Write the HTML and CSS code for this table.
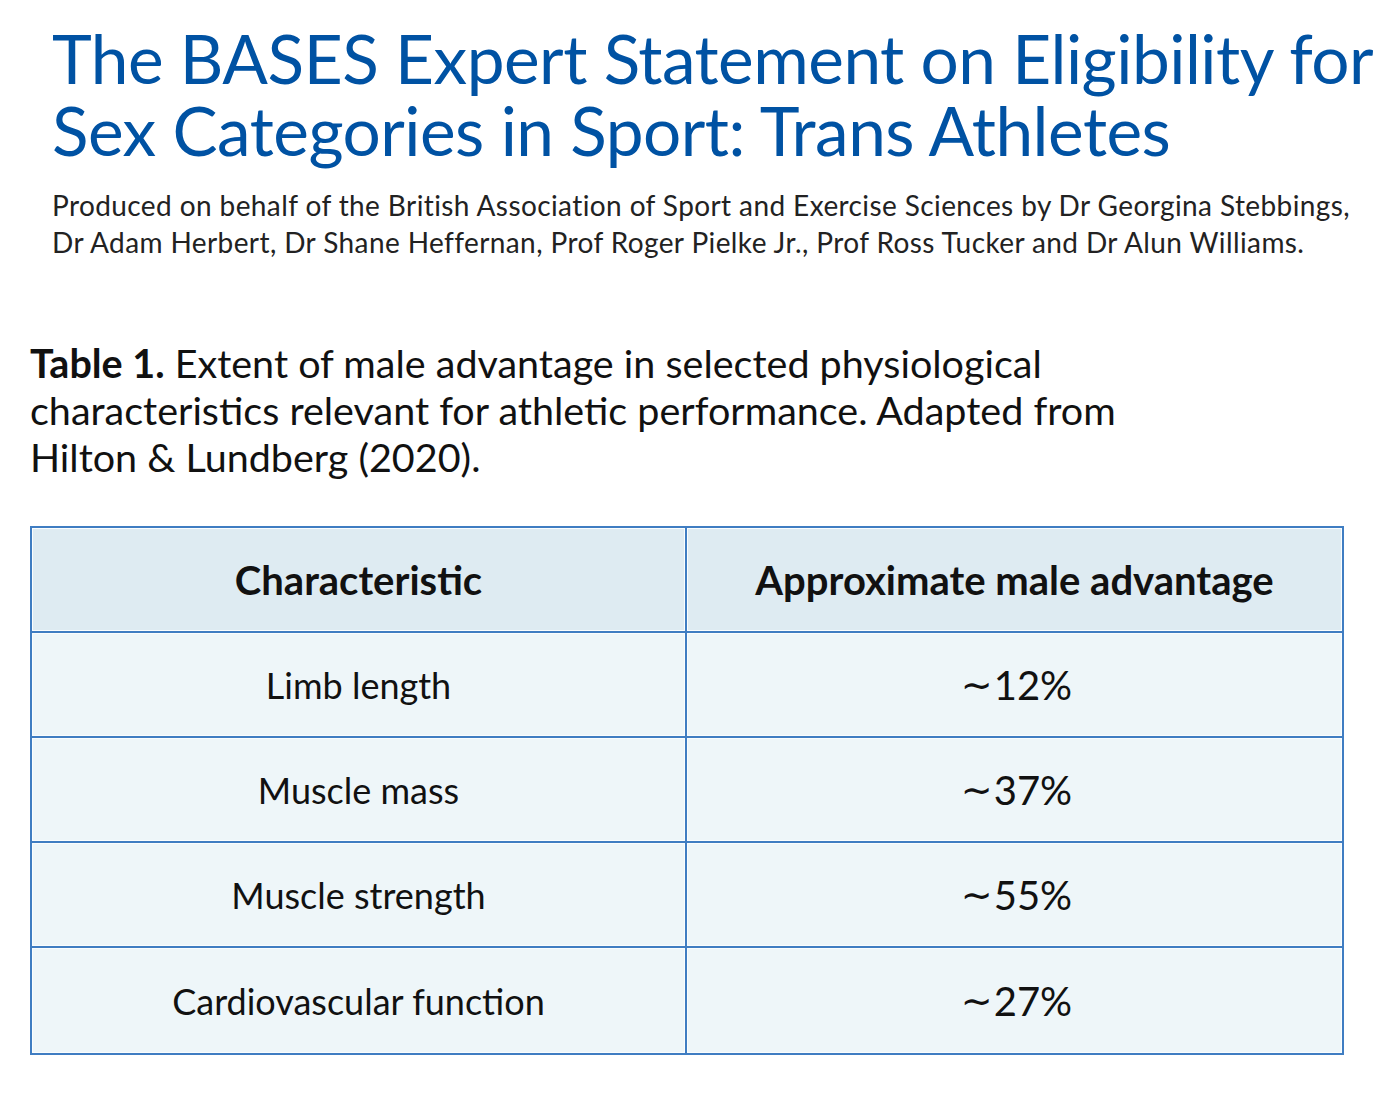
FILE: index.html
```html
<!DOCTYPE html>
<html lang="en">
<head>
<meta charset="utf-8">
<title>The BASES Expert Statement on Eligibility for Sex Categories in Sport</title>
<link rel="stylesheet" href="styles.css">
</head>
<body>
<main class="page">
  <header class="head">
    <h1 class="title">The BASES Expert Statement on Eligibility for<br>Sex Categories in Sport: Trans Athletes</h1>
    <p class="byline">Produced on behalf of the British Association of Sport and Exercise Sciences by Dr Georgina Stebbings,<br>Dr Adam Herbert, Dr Shane Heffernan, Prof Roger Pielke Jr., Prof Ross Tucker and Dr Alun Williams.</p>
  </header>
  <p class="caption"><strong>Table 1.</strong> Extent of male advantage in selected physiological<br>characteristics relevant for athletic performance. Adapted from<br>Hilton &amp; Lundberg (2020).</p>
  <div class="table">
    <div class="cell th">Characteristic</div>
    <div class="cell th">Approximate male advantage</div>
    <div class="cell">Limb length</div>
    <div class="cell val"><span class="tilde">∼</span>12%</div>
    <div class="cell">Muscle mass</div>
    <div class="cell val"><span class="tilde">∼</span>37%</div>
    <div class="cell">Muscle strength</div>
    <div class="cell val"><span class="tilde">∼</span>55%</div>
    <div class="cell">Cardiovascular function</div>
    <div class="cell val"><span class="tilde">∼</span>27%</div>
  </div>
</main>
</body>
</html>
```

FILE: styles.css
```css
html, body {
  margin: 0;
  padding: 0;
  background: #ffffff;
}
body {
  font-family: Lato, "Open Sans", sans-serif;
  color: #111;
}
.page {
  width: 1400px;
  padding: 0 0 0 30px;
  box-sizing: border-box;
}
.head {
  padding-left: 22px;
}
.title {
  margin: 0;
  padding-top: 22px;
  font-size: 67.5px;
  line-height: 72px;
  font-weight: 400;
  color: #0052a3;
  letter-spacing: -0.5px;
  white-space: nowrap;
}
.byline {
  margin: 21px 0 0;
  font-size: 28px;
  line-height: 37px;
  color: #222;
  letter-spacing: 0.4px;
  white-space: nowrap;
}
.caption {
  margin: 78px 0 0;
  font-size: 39.5px;
  line-height: 47px;
  color: #111;
  white-space: nowrap;
}
.caption strong {
  font-weight: 700;
}
.table {
  margin-top: 46px;
  width: 1314px;
  display: grid;
  grid-template-columns: 1fr 1fr;
  grid-auto-rows: 105px;
  border: 2px solid #3f7dc2;
  box-sizing: border-box;
  background: #eef6f9;
}
.cell {
  display: flex;
  align-items: center;
  justify-content: center;
  font-size: 36px;
  color: #111;
  border-bottom: 2px solid #3f7dc2;
  box-shadow: inset 0 0 0 1px #fafdfe;
}
.cell:nth-child(odd) {
  border-right: 2px solid #3f7dc2;
}
.cell:nth-last-child(-n+2) {
  border-bottom: none;
}
.th {
  background: #deebf2;
  font-weight: 700;
  font-size: 40px;
}
.val {
  font-size: 40px;
  padding-left: 4px;
}
.tilde {
  font-family: "DejaVu Sans", sans-serif;
  font-size: 38px;
  margin-right: 1px;
}
```
